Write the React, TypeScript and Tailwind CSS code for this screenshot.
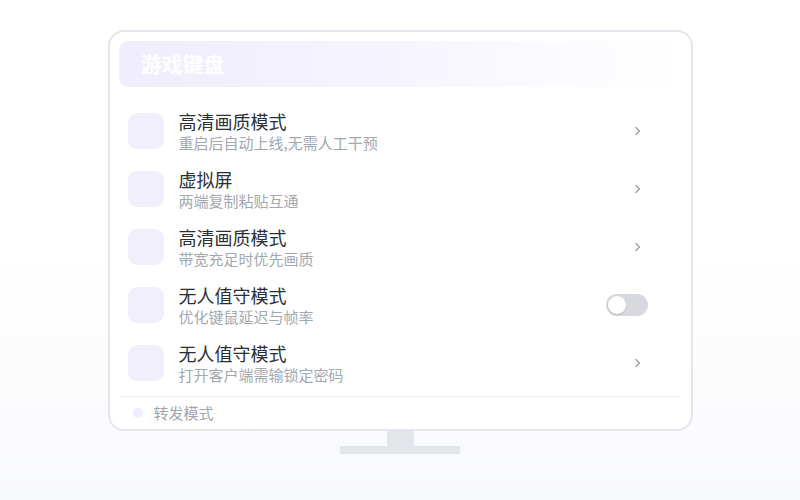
import { useState } from 'react'

type Row = {
  title: string
  desc: string
  kind: 'link' | 'toggle'
}

const rows: Row[] = [
  { title: '高清画质模式', desc: '重启后自动上线,无需人工干预', kind: 'link' },
  { title: '虚拟屏', desc: '两端复制粘贴互通', kind: 'link' },
  { title: '高清画质模式', desc: '带宽充足时优先画质', kind: 'link' },
  { title: '无人值守模式', desc: '优化键鼠延迟与帧率', kind: 'toggle' },
  { title: '无人值守模式', desc: '打开客户端需输锁定密码', kind: 'link' },
]

function Chevron(): JSX.Element {
  return (
    <svg width="8" height="12" viewBox="0 0 8 12" fill="none" className="mr-[6px]">
      <path d="M2 2.5 L5.5 6 L2 9.5" stroke="#9aa1ab" strokeWidth="1.4" strokeLinecap="round" strokeLinejoin="round" />
    </svg>
  )
}

function Toggle(): JSX.Element {
  const [on, setOn] = useState(false)
  return (
    <button
      type="button"
      onClick={() => setOn(!on)}
      className={`flex h-[22px] w-[42px] shrink-0 items-center rounded-full p-[2px] ${on ? 'justify-end bg-[#8b7cf6]' : 'justify-start bg-[#d7d9de]'}`}
    >
      <span className="h-[18px] w-[18px] rounded-full bg-white shadow-[0_1px_2px_rgba(0,0,0,0.15)]" />
    </button>
  )
}

export default function App(): JSX.Element {
  return (
    <div
      className="flex min-h-[500px] flex-col items-center bg-gradient-to-b from-white via-white to-[#f8f9fb] pt-[30px]"
      style={{ fontFamily: '"Noto Sans CJK SC", "Noto Sans", sans-serif' }}
    >
      <div className="w-[585px] rounded-[16px] border-2 border-[#e4e6eb] bg-white px-[9px] pt-[9px]">
        <div className="flex h-[46px] items-center rounded-[10px] bg-gradient-to-r from-[#efecfd] via-[#f6f5fe] to-white px-[22px]">
          <span className="text-[21px] font-bold text-white">游戏键盘</span>
        </div>

        <div className="pt-[15px]">
          {rows.map((row, i) => (
            <div key={i} className="flex h-[58px] items-center pl-[9px] pr-[34px]">
              <div className="h-[36px] w-[36px] shrink-0 rounded-[9px] bg-[#f2effd]" />
              <div className="ml-[15px] flex flex-1 flex-col">
                <span className="text-[18px] leading-[24px] text-[#2b2f36]">{row.title}</span>
                <span className="text-[15px] leading-[20px] text-[#a3a8b0]">{row.desc}</span>
              </div>
              <div className="flex w-[42px] justify-end">
                {row.kind === 'toggle' ? <Toggle /> : <Chevron />}
              </div>
            </div>
          ))}
        </div>

        <div className="mx-[1px] mt-[4px] border-t border-[#eef0f3]" />

        <div className="flex h-[32px] items-center pl-[14px]">
          <span className="h-[10px] w-[10px] rounded-full bg-[#efecfd]" />
          <span className="ml-[11px] text-[15px] text-[#a0a5ad]">转发模式</span>
        </div>
      </div>

      <div className="h-[15px] w-[27px] bg-[#e2e5e9]" />
      <div className="h-[8px] w-[120px] bg-[#e2e5e9]" />
    </div>
  )
}
